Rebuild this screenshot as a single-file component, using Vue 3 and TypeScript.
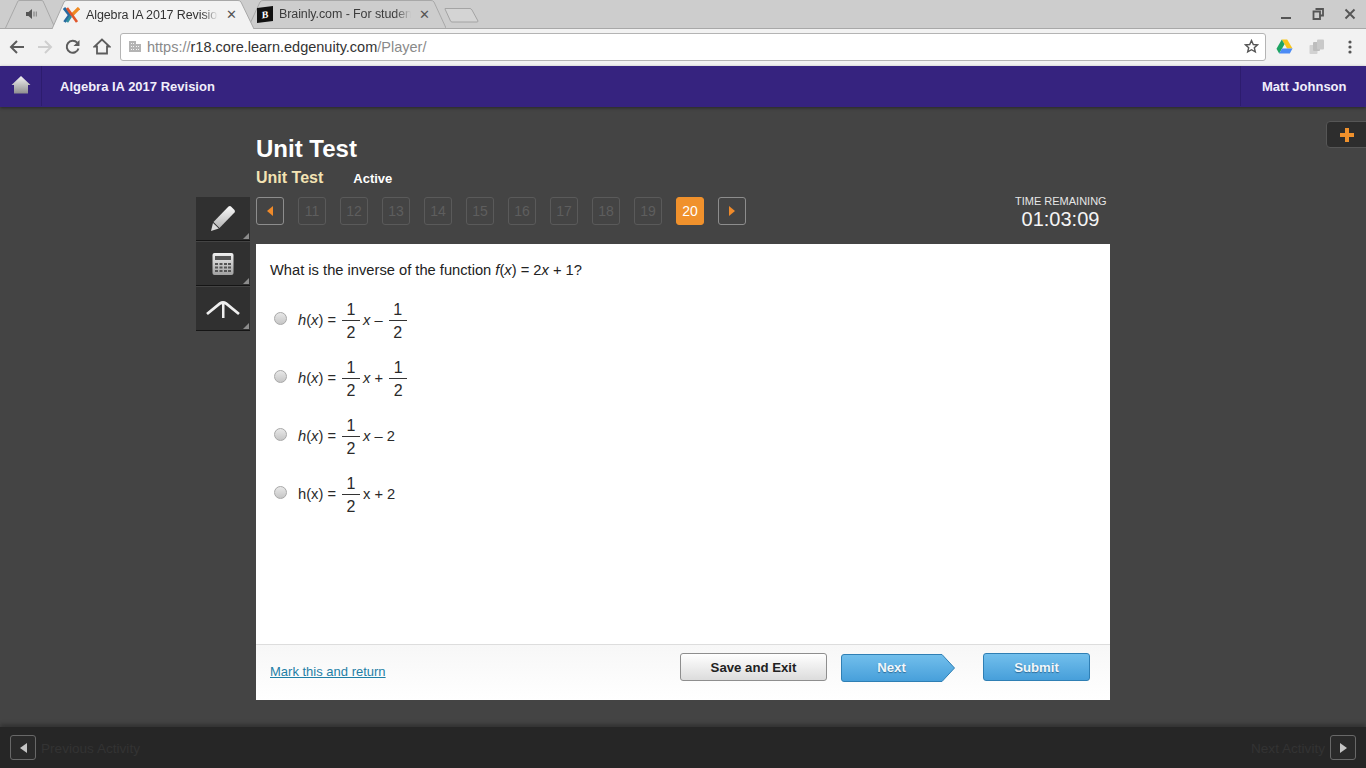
<script setup lang="ts">
interface Option { italic: boolean; op: string; second: boolean }
const options: Option[] = [
  { italic: true, op: ' – ', second: true },
  { italic: true, op: ' + ', second: true },
  { italic: true, op: ' – 2', second: false },
  { italic: false, op: ' + 2', second: false },
]
const pages: number[] = [11, 12, 13, 14, 15, 16, 17, 18, 19]
</script>

<template>
  <div class="screen">
    <div class="tabstrip">
      <div class="tab tab-audio">
        <svg class="tab-shape" width="50" height="28" viewBox="0 0 50 28"><path d="M0.5 28 L13 1 Q13.5 0.5 15 0.5 H36 Q37.5 0.5 38 1 L50 28" fill="#cdcdcd" stroke="#a8a8a8"/></svg>
        <svg class="tab-ico" width="12" height="12" viewBox="0 0 12 12"><path d="M0 4h2.5L6 1v10L2.500 8H0z" fill="#555"/><path d="M7.500 3.500h1v5h-1zM9.800 3.500h.9v5h-.9z" fill="#777"/></svg>
      </div>
      <div class="tab tab-active">
        <svg class="tab-shape" width="202" height="29" viewBox="0 0 202 29"><path d="M0 29 L12 2 Q13 0.500 15 0.500 H186 Q188 0.500 189 2 L202 29" fill="#f2f2f2" stroke="#a8a8a8"/></svg>
        <svg class="favicon" width="17" height="16" viewBox="0 0 17 16">
          <path d="M1 1 L6.500 8 L1.500 15" fill="none" stroke="#2a6aa0" stroke-width="3"/>
          <path d="M16 1 L9 8" fill="none" stroke="#ef8a22" stroke-width="3.200"/>
          <path d="M4 1 L14 15" fill="none" stroke="#e0552b" stroke-width="2.600"/>
          <path d="M8 9 L4 15" fill="none" stroke="#2f8f9f" stroke-width="2.600"/>
        </svg>
        <span class="tab-title">Algebra IA 2017 Revision</span>
        <span class="tab-x">✕</span>
      </div>
      <div class="tab tab-second">
        <svg class="tab-shape" width="198" height="28" viewBox="0 0 198 28"><path d="M0 28 L12 2 Q13 0.500 15 0.500 H183 Q185 0.500 186 2 L198 28" fill="#cdcdcd" stroke="#a8a8a8"/></svg>
        <span class="brainly">B</span>
        <span class="tab-title dim">Brainly.com - For students</span>
        <span class="tab-x">✕</span>
      </div>
      <svg class="newtab" width="36" height="16" viewBox="0 0 36 16"><path d="M1 1.500 H26 Q27 1.500 28 3 L34 14 Q34 15 33 15 H8 Q7 15 6.500 14 L1 2 Z" fill="#d4d4d4" stroke="#a4a4a4"/></svg>
      <div class="winctl">
        <svg width="12" height="12" viewBox="0 0 12 12"><rect x="1" y="9" width="10" height="2" fill="#555"/></svg>
        <svg width="12" height="12" viewBox="0 0 12 12"><path d="M3.500 1h7.500v6.500H8.500M1.500 3.500h6.500v7.500H1.500z" fill="none" stroke="#555" stroke-width="1.800"/></svg>
        <svg width="12" height="12" viewBox="0 0 12 12"><path d="M1.500 1.500l9 9M10.500 1.500l-9 9" stroke="#555" stroke-width="1.900"/></svg>
      </div>
    </div>

    <div class="toolbar">
      <svg class="tool" width="16" height="16" viewBox="0 0 16 16"><path d="M15 8H2M8 2L2 8l6 6" fill="none" stroke="#5c5c5c" stroke-width="2"/></svg>
      <svg class="tool" width="16" height="16" viewBox="0 0 16 16"><path d="M1 8h13M8 2l6 6-6 6" fill="none" stroke="#cfcfcf" stroke-width="2"/></svg>
      <svg class="tool" width="16" height="16" viewBox="0 0 16 16"><path d="M13.500 9.500A6 6 0 1 1 12.200 3.700" fill="none" stroke="#5c5c5c" stroke-width="2"/><path d="M14.500 1v6h-6z" fill="#5c5c5c"/></svg>
      <svg class="tool" width="18" height="17" viewBox="0 0 18 17"><path d="M9 1.500L1.500 8.500h2.500v7h10v-7h2.500z" fill="none" stroke="#5c5c5c" stroke-width="1.800"/></svg>
      <div class="omnibox">
        <svg width="14" height="13" viewBox="0 0 14 13"><path d="M1 1h7v3h5v8H1z" fill="#b4b4b4"/><path d="M3 3h1v1H3zM5 3h1v1H5zM3 6h1v1H3zM5 6h1v1H5zM8 6h1v1H8zM10 6h1v1h-1zM3 9h1v1H3zM5 9h1v1H5zM8 9h1v1H8zM10 9h1v1h-1z" fill="#f4f4f4"/></svg>
        <span class="url"><span class="faint">https://</span>r18.core.learn.edgenuity.com<span class="faint">/Player/</span></span>
        <svg class="star" width="15" height="15" viewBox="0 0 15 15"><path d="M7.500 1.500l1.800 4 4.200.4-3.200 2.800 1 4.200-3.800-2.200-3.800 2.200 1-4.200L1.500 5.900l4.200-.4z" fill="none" stroke="#555" stroke-width="1.400"/></svg>
      </div>
      <svg class="ext-drive" width="17" height="15" viewBox="0 0 17 15"><path d="M5.800 0.500h5.400l5.300 9h-5.400z" fill="#f8c51c"/><path d="M5.800 0.500L0.500 9.700l2.700 4.800 5.300-9.200z" fill="#1da462"/><path d="M3.200 14.500h10.600l2.700-5H6z" fill="#4c8bf5"/></svg>
      <svg class="ext-copy" width="16" height="16" viewBox="0 0 16 16"><rect x="0.500" y="6" width="8" height="9" rx="1" fill="#d2d2d2"/><rect x="4" y="3" width="7" height="9" rx="1" fill="#bdbdbd"/><rect x="8" y="0.500" width="7" height="10" rx="1" fill="#c9c9c9"/></svg>
      <svg class="ext-menu" width="4" height="14" viewBox="0 0 4 14"><circle cx="2" cy="2" r="1.600" fill="#555"/><circle cx="2" cy="7" r="1.600" fill="#555"/><circle cx="2" cy="12" r="1.600" fill="#555"/></svg>
    </div>

    <header class="appbar">
      <div class="homecell">
        <svg width="20" height="20" viewBox="0 0 20 20">
          <defs><linearGradient id="homeg" x1="0" y1="0" x2="0" y2="1"><stop offset="0" stop-color="#f4f4f4"/><stop offset="1" stop-color="#8f8f8f"/></linearGradient></defs>
          <path d="M10 1L0.500 10H3v8.500h14V10h2.500z" fill="url(#homeg)"/>
        </svg>
      </div>
      <div class="course">Algebra IA 2017 Revision</div>
      <div class="user">Matt Johnson</div>
    </header>

    <main class="main">
      <button class="plus" type="button">
        <svg width="14" height="14" viewBox="0 0 14 14"><path d="M5 0h4v5h5v4H9v5H5V9H0V5h5z" fill="#f0912c"/></svg>
      </button>

      <div class="stage">
        <div class="heading">
          <h1>Unit Test</h1>
          <div class="subhead"><span class="sub-a">Unit Test</span><span class="sub-b">Active</span></div>
        </div>

        <aside class="rail">
          <div class="railbtn">
            <svg width="26" height="28" viewBox="0 0 26 28">
              <defs><linearGradient id="peng" x1="0" y1="0" x2="0" y2="1"><stop offset="0" stop-color="#fafafa"/><stop offset="1" stop-color="#b4b4b4"/></linearGradient></defs>
              <path d="M18.500 1.500q1.500-1 2.500 0l3.500 3.500q1 1 0 2.500L9.500 23 3.500 17z" fill="url(#peng)"/>
              <path d="M3 18l5.800 5.500L1 26z" fill="#dcdcdc"/>
            </svg>
          </div>
          <div class="railbtn">
            <svg width="22" height="24" viewBox="0 0 22 24">
              <defs><linearGradient id="calg" x1="0" y1="0" x2="0" y2="1"><stop offset="0" stop-color="#f0f0f0"/><stop offset="1" stop-color="#a0a0a0"/></linearGradient></defs>
              <rect x="0.500" y="1" width="21" height="22" rx="2" fill="url(#calg)"/>
              <rect x="3" y="4" width="16" height="4" fill="#555"/>
              <path d="M3 11h3v2H3zM7.500 11h3v2h-3zM12 11h3v2h-3zM16 11h3v2h-3zM3 14.500h3v2H3zM7.500 14.500h3v2h-3zM12 14.500h3v2h-3zM16 14.500h3v2h-3zM3 18h3v2H3zM7.500 18h3v2h-3zM12 18h3v2h-3zM16 18h3v2h-3z" fill="#555"/>
            </svg>
          </div>
          <div class="railbtn">
            <svg width="34" height="20" viewBox="0 0 34 20"><path d="M1 15L14 4.500Q17 2.500 20 4.500L33 15" fill="none" stroke="#eee" stroke-width="2.800"/><rect x="16" y="4" width="2.500" height="15" fill="#eee"/></svg>
          </div>
        </aside>

        <nav class="pager">
          <button class="pg pg-arrow" type="button"><svg width="6" height="10" viewBox="0 0 6 10"><path d="M6 0v10L0 5z" fill="#ef8a2a"/></svg></button>
          <button v-for="p in pages" :key="p" class="pg" type="button">{{ p }}</button>
          <button class="pg pg-current" type="button">20</button>
          <button class="pg pg-arrow" type="button"><svg width="6" height="10" viewBox="0 0 6 10"><path d="M0 0v10l6-5z" fill="#ef8a2a"/></svg></button>
          <div class="timer">
            <div class="timer-label">TIME REMAINING</div>
            <div class="timer-value">01:03:09</div>
          </div>
        </nav>

        <section class="card">
          <div class="question">
            <p class="prompt">What is the inverse of the function <i>f</i>(<i>x</i>) = 2<i>x</i> + 1?</p>
            <div v-for="(o, i) in options" :key="i" class="option">
              <span class="radio"></span>
              <span class="expr">
                <span class="lhs"><i v-if="o.italic">h</i><template v-else>h</template>(<i v-if="o.italic">x</i><template v-else>x</template>) =</span>
                <span class="frac"><span class="num">1</span><span class="den">2</span></span>
                <span class="tail"><i v-if="o.italic">x</i><template v-else>x</template>{{ o.op }}</span>
                <span v-if="o.second" class="frac frac-b"><span class="num">1</span><span class="den">2</span></span>
              </span>
            </div>
          </div>
          <footer class="cardfoot">
            <a class="mark" href="#">Mark this and return</a>
            <div class="actions">
              <button class="btn btn-save" type="button">Save and Exit</button>
              <button class="btn-next" type="button">
                <svg class="next-shape" width="115" height="28" viewBox="0 0 115 28">
                  <defs><linearGradient id="nextg" x1="0" y1="0" x2="0" y2="1"><stop offset="0" stop-color="#72bfec"/><stop offset="1" stop-color="#479fda"/></linearGradient></defs>
                  <path d="M3 0.500H101L113.500 14L101 27.500H3Q0.500 27.500 0.500 25V3Q0.500 0.500 3 0.500Z" fill="url(#nextg)" stroke="#2f7fb4"/>
                </svg>
                <span class="next-label">Next</span>
              </button>
              <button class="btn btn-submit" type="button">Submit</button>
            </div>
          </footer>
        </section>
      </div>
    </main>

    <footer class="bottombar">
      <div class="act">
        <button class="act-btn" type="button"><svg width="7" height="10" viewBox="0 0 7 10"><path d="M7 0v10L0 5z" fill="#c4c4c4"/></svg></button>
        <span class="act-label">Previous Activity</span>
      </div>
      <div class="act">
        <span class="act-label">Next Activity</span>
        <button class="act-btn" type="button"><svg width="7" height="10" viewBox="0 0 7 10"><path d="M0 0v10l7-5z" fill="#c4c4c4"/></svg></button>
      </div>
    </footer>
  </div>
</template>

<style>
html, body { margin: 0; padding: 0; overflow: hidden; }
</style>

<style scoped>
* { box-sizing: border-box; }
.screen {
  width: 1366px; height: 768px; display: flex; flex-direction: column; overflow: hidden;
  font-family: "Liberation Sans", Arial, sans-serif; background: #444;
}
.tabstrip {
  height: 29px; background: #cdcdcd; border-bottom: 1px solid #a8a8a8; display: flex; align-items: stretch;
  padding-left: 5px; flex: none; position: relative;
}
.tab { position: relative; display: flex; align-items: center; height: 28px; }
.tab-shape { position: absolute; left: 0; top: 0; }
.tab-audio { width: 50px; justify-content: center; }
.tab-ico { position: relative; left: 2px; }
.tab-active { width: 202px; margin-left: -3px; padding-left: 11px; z-index: 2; height: 29px; }
.tab-second { width: 198px; margin-left: -6px; padding-left: 9px; }
.favicon, .brainly, .tab-title, .tab-x { position: relative; }
.favicon { flex: none; }
.brainly { flex: none; }
.tab-title {
  font-size: 12.500px; letter-spacing: -0.1px; color: #333; white-space: nowrap; overflow: hidden; width: 132px; margin-left: 6px;
  -webkit-mask-image: linear-gradient(90deg, #000 88%, transparent 100%);
  mask-image: linear-gradient(90deg, #000 88%, transparent 100%);
}
.tab-second .tab-title { width: 132px; color: #3c3c3c; margin-left: 6px; }
.tab-x { font-size: 13px; color: #555; margin-left: 8px; }
.brainly {
  width: 16px; height: 15px; background: #111; color: #fff; font: bold 10px "Liberation Serif", serif;
  display: flex; align-items: center; justify-content: center; transform: skewY(-8deg);
}
.newtab { align-self: flex-start; margin: 7px 0 0 -2px; }
.winctl { margin-left: auto; display: flex; align-items: center; gap: 20px; padding: 0 10px 0 0; height: 28px; }
.toolbar {
  height: 37px; background: #f2f2f2; display: flex; align-items: center; padding: 0 0 2px 9px; flex: none;
}
.tool { margin-right: 12px; flex: none; }
.omnibox {
  width: 1146px; height: 28px; margin-left: -3px; background: #fff; border: 1px solid #b4b4b4; border-radius: 3px;
  display: flex; align-items: center; padding: 0 6px 0 7px; flex: none;
}
.url { font-size: 14.500px; color: #333; margin-left: 5px; white-space: nowrap; }
.faint { color: #8a8a8a; }
.star { margin-left: auto; margin-right: 0; }
.ext-drive { margin-left: 10px; }
.ext-copy { margin-left: 16px; }
.ext-menu { margin-left: 23px; }
.appbar {
  height: 41px; background: #36237f; display: flex; align-items: center; flex: none; color: #f1eefb;
  box-shadow: 0 1px 3px rgba(0, 0, 0, .45); position: relative; z-index: 3;
  font-size: 13px; font-weight: bold; padding-bottom: 1px;
}
.homecell { width: 42px; height: 100%; border-right: 1px solid #2d1c6e; display: flex; align-items: center; justify-content: center; padding-bottom: 3px; }
.course { margin-left: 18px; flex: 1; }
.user { width: 126px; height: 100%; border-left: 1px solid #2d1c6e; display: flex; align-items: center; padding-left: 21px; }
.main { flex: 1; position: relative; background: #444; min-height: 0; }
.plus {
  position: absolute; right: -2px; top: 14px; width: 42px; height: 27px; background: #2d2d2d; border: 1px solid #565656;
  border-radius: 4px 0 0 4px; padding: 0 1px 0 0; display: flex; align-items: center; justify-content: center;
}
.stage {
  margin-left: 196px; display: grid; grid-template-columns: 54px 854px; column-gap: 6px;
  grid-template-rows: 90px 47px 456px;
}
.heading { grid-column: 2; grid-row: 1; padding-top: 28px; color: #fff; }
.heading h1 { margin: 0; font-size: 24px; line-height: 28px; font-weight: bold; }
.subhead { display: flex; align-items: baseline; margin-top: 5px; }
.sub-a { color: #f3e3b3; font-size: 16px; font-weight: bold; line-height: 20px; }
.sub-b { color: #fff; font-size: 13px; font-weight: bold; margin-left: 30px; }
.rail { grid-column: 1; grid-row: 2 / span 2; display: flex; flex-direction: column; gap: 1px; }
.railbtn {
  width: 54px; height: 44px; background: #303030; border-bottom: 1px solid #151515; position: relative;
  display: flex; align-items: center; justify-content: center;
}
.railbtn::after {
  content: ""; position: absolute; right: 1px; bottom: 1px; width: 0; height: 0;
  border-left: 6px solid transparent; border-bottom: 6px solid #8c8c8c;
}
.pager { grid-column: 2; grid-row: 2; display: flex; align-items: flex-start; gap: 14px; }
.pg {
  width: 28px; height: 28px; padding: 0; background: transparent; border: 1px solid #5a5a5a; border-radius: 3px;
  color: #5e5e5e; font: 14px "Liberation Sans", Arial, sans-serif; display: flex; align-items: center; justify-content: center;
}
.pg-arrow { border-color: #8d8d8d; }
.pg-current { background: #f0912c; border-color: #f0912c; color: #fff; }
.timer { margin-left: auto; width: 91px; margin-right: 4px; margin-top: -2px; text-align: center; color: #fff; white-space: nowrap; }
.timer-label { font-size: 11px; line-height: 13px; color: #e6e6e6; }
.timer-value { font-size: 20px; line-height: 23px; color: #f4f4f4; }
.card { grid-column: 2; grid-row: 3; background: #fff; display: flex; flex-direction: column; }
.question { flex: 1; padding: 17px 14px 0; color: #222; }
.prompt { margin: 0 0 12px; font-size: 14.700px; line-height: 18px; }
.option { display: flex; align-items: center; height: 58px; }
.radio {
  width: 13px; height: 13px; border-radius: 50%; border: 1px solid #a8a8a8; margin-left: 4px; margin-top: -4px;
  background: linear-gradient(#e8e8e8, #c6c6c6); flex: none;
}
.expr { margin-left: 11px; font-size: 14.700px; display: flex; align-items: center; white-space: pre; color: #2a2a2a; }
.lhs { white-space: pre; }
.frac { display: inline-flex; flex-direction: column; align-items: center; width: 18px; font-size: 16px; margin: 3px 0 0 6px; }
.num { width: 100%; text-align: center; border-bottom: 1px solid #333; line-height: 21px; }
.den { line-height: 23px; }
.tail { margin-left: 3px; white-space: pre; }
.frac-b { margin-left: 2px; }
.cardfoot {
  height: 56px; border-top: 1px solid #ddd; background: linear-gradient(#f7f7f7, #fff); display: flex; align-items: flex-start;
  padding: 8px 20px 0 14px; flex: none;
}
.mark { font-size: 13px; color: #1f7fa6; text-decoration: underline; margin-top: 11px; }
.actions { margin-left: auto; display: flex; align-items: flex-start; }
.btn {
  height: 28px; border-radius: 3px; font: bold 13.200px "Liberation Sans", Arial, sans-serif; padding: 1px 0 0;
}
.btn-save { width: 147px; border: 1px solid #8e8e8e; color: #222; background: linear-gradient(#fff, #dcdcdc); }
.btn-next {
  width: 114px; height: 28px; margin-left: 14px; margin-top: 1px; border: 0; padding: 0 13px 1px 0; background: transparent; position: relative;
  font: bold 13.200px "Liberation Sans", Arial, sans-serif; color: #f2f7fa;
}
.next-shape { position: absolute; left: 0; top: 0; }
.next-label { position: relative; text-shadow: 0 1px 1px rgba(30, 80, 120, .7); }
.btn-submit {
  width: 107px; margin-left: 28px; border: 1px solid #2f7fb4; color: #f2f7fa; background: linear-gradient(#72bfec, #479fda);
  text-shadow: 0 1px 1px rgba(30, 80, 120, .7);
}
.bottombar {
  height: 41px; flex: none; background: #262626; display: flex; justify-content: space-between; align-items: center;
  padding: 0 10px; box-shadow: 0 -3px 4px rgba(0, 0, 0, .25); position: relative;
}
.act { display: flex; align-items: center; gap: 5px; }
.act-btn {
  width: 26px; height: 25px; padding: 0; background: #2a2a2a; border: 1px solid #686868; border-radius: 3px;
  display: flex; align-items: center; justify-content: center;
}
.act-label { color: #333; font-size: 13.600px; padding-top: 2px; }
</style>
